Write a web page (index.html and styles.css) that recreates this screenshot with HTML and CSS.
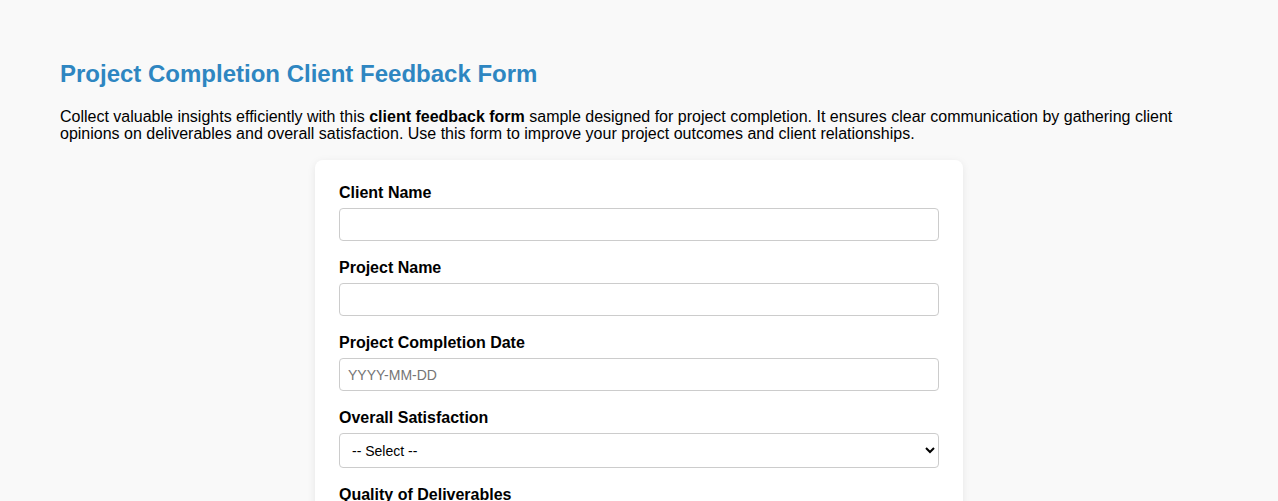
FILE: index.html
```html
<!DOCTYPE html>
<html lang="en">
<head>
<meta charset="utf-8">
<title>Project Completion Client Feedback Form</title>
<link rel="stylesheet" href="styles.css">
</head>
<body>
<h1 class="title">Project Completion Client Feedback Form</h1>
<p class="intro">Collect valuable insights efficiently with this <strong>client feedback form</strong> sample designed for project completion. It ensures clear communication by gathering client opinions on deliverables and overall satisfaction. Use this form to improve your project outcomes and client relationships.</p>
<form class="card">
  <div class="field">
    <label class="label" for="client">Client Name</label>
    <input class="control" id="client" type="text">
  </div>
  <div class="field">
    <label class="label" for="project">Project Name</label>
    <input class="control" id="project" type="text">
  </div>
  <div class="field">
    <label class="label" for="date">Project Completion Date</label>
    <input class="control" id="date" type="text" placeholder="YYYY-MM-DD">
  </div>
  <div class="field">
    <label class="label" for="sat">Overall Satisfaction</label>
    <select class="control select" id="sat">
      <option>-- Select --</option>
      <option>Very Satisfied</option>
      <option>Satisfied</option>
      <option>Neutral</option>
      <option>Dissatisfied</option>
    </select>
  </div>
  <div class="field">
    <label class="label" for="quality">Quality of Deliverables</label>
    <select class="control select" id="quality">
      <option>-- Select --</option>
    </select>
  </div>
</form>
</body>
</html>
```

FILE: styles.css
```css
html, body {
  margin: 0;
  background: #f9f9f9;
}
body {
  padding: 60px 60px 40px;
  font-family: "Liberation Sans", Arial, sans-serif;
  color: #000;
}
.title {
  margin: 0 0 20px;
  font-size: 24px;
  line-height: 28px;
  font-weight: bold;
  color: #2e86c1;
}
.intro {
  margin: 0 0 18px;
  font-size: 16px;
  line-height: 17px;
}
.card {
  max-width: 600px;
  margin: 0 auto;
  padding: 24px;
  background: #fff;
  border-radius: 8px;
  box-shadow: 0 2px 8px rgba(0, 0, 0, 0.08);
}
.field {
  margin-bottom: 18px;
}
.label {
  display: block;
  margin-bottom: 6px;
  font-size: 16px;
  line-height: 18px;
  font-weight: bold;
}
.control {
  display: block;
  box-sizing: border-box;
  width: 100%;
  height: 33px;
  padding: 8px;
  font-family: "Liberation Sans", Arial, sans-serif;
  font-size: 14px;
  border: 1px solid #ccc;
  border-radius: 4px;
  background: #fff;
  color: #000;
}
.control::placeholder {
  color: #757575;
}
.select {
  height: 35px;
  padding: 8px;
}
```
